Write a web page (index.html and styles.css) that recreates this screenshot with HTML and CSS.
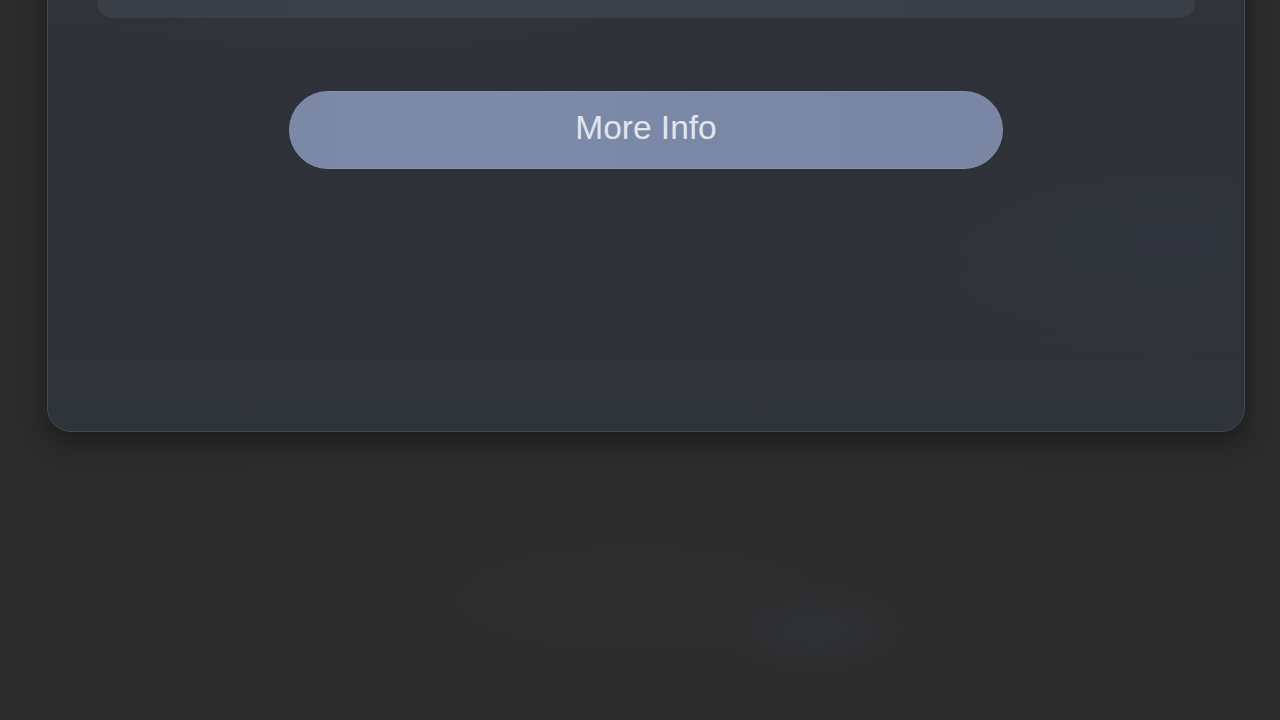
FILE: index.html
```html
<!DOCTYPE html>
<html lang="en">
<head>
<meta charset="utf-8">
<title>More Info</title>
<link rel="stylesheet" href="styles.css">
</head>
<body>
<main class="page">
  <section class="card">
    <div class="panel"></div>
    <div class="actions">
      <button class="more-btn" type="button">More Info</button>
    </div>
  </section>
</main>
</body>
</html>
```
FILE: styles.css
```css
* { box-sizing: border-box; }
html, body { margin: 0; padding: 0; }
body {
  width: 1280px;
  height: 720px;
  overflow: hidden;
  background-color: #2b2b2b;
  background-image:
    radial-gradient(ellipse 90px 45px at 815px 630px, rgba(52,56,66,0.5), rgba(43,43,43,0) 100%),
    radial-gradient(ellipse 700px 200px at 640px 600px, rgba(50,50,52,0.3), rgba(43,43,43,0) 100%);
  font-family: "Liberation Sans", Arial, sans-serif;
}
.page {
  padding: 0 36px 0 47px;
}
.card {
  margin-top: -233px;
  width: 1198px;
  border: 1px solid #444a55;
  border-radius: 24px;
  padding: 50px 49px 262px 49px;
  background-color: #2e3238;
  background-image:
    radial-gradient(ellipse 420px 180px at 300px 110px, rgba(60,66,74,0.45), rgba(46,50,56,0) 100%),
    radial-gradient(ellipse 300px 120px at 1120px 470px, rgba(52,58,70,0.3), rgba(46,50,56,0) 100%),
    linear-gradient(180deg, #31363d 0%, #2e3137 60%, #2f333a 100%);
  box-shadow: 0 10px 24px rgba(0,0,0,0.35);
}
.panel {
  height: 200px;
  border-radius: 16px;
  background: linear-gradient(90deg, #3a3f47 0%, #3d424a 40%, #3a3f47 100%);
}
.actions {
  display: flex;
  justify-content: center;
  margin-top: 73px;
}
.more-btn {
  width: 714px;
  height: 78px;
  border: 1px solid #8590aa;
  border-radius: 39px;
  background: linear-gradient(90deg, #7b88a6 0%, #7e8ba8 30%, #7b88a5 60%, #7a87a4 100%);
  color: #e2e5ec;
  font-family: "Liberation Sans", Arial, sans-serif;
  font-size: 33.5px;
  padding: 0 0 4px 0;
  cursor: pointer;
}
```
